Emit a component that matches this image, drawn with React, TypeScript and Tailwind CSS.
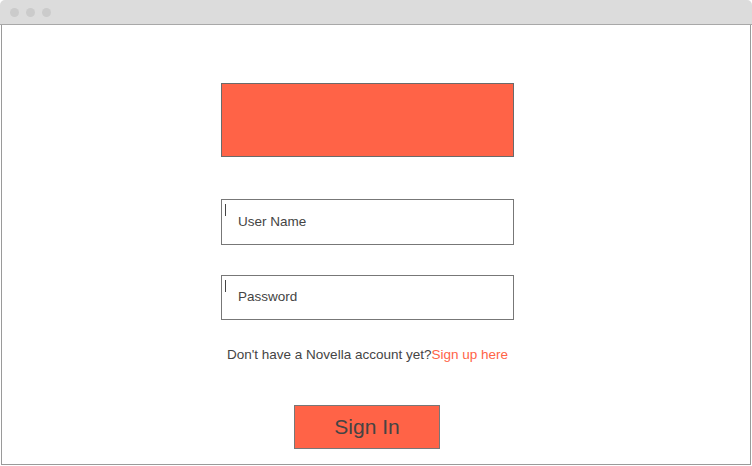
export default function App() {
  return (
    <div className="w-[752px] h-[466px] bg-white flex flex-col" style={{ fontFamily: '"Liberation Sans", Arial, sans-serif' }}>
      <div className="h-[25px] bg-[#dcdcdc] rounded-t-[5px] flex items-center gap-[7px] pl-[10px] border-b border-[#a8a8a8] shrink-0">
        <div className="w-[9px] h-[9px] rounded-full bg-[#cbcbcb]" />
        <div className="w-[9px] h-[9px] rounded-full bg-[#cbcbcb]" />
        <div className="w-[9px] h-[9px] rounded-full bg-[#cbcbcb]" />
      </div>
      <div className="flex-1 mx-[1px] mb-[1px] border-x border-b border-[#9a9a9a] flex flex-col">
        <div className="ml-[219px] w-[293px] flex flex-col items-center">
          <div className="mt-[58px] w-[293px] h-[74px] bg-[#ff6347] border border-[#6a6a6a]" />
          <div className="mt-[42px] w-[293px] h-[46px] border border-[#777] relative flex items-center pl-4 text-[13.5px] text-[#444]">
            <div className="absolute left-[3px] top-[4px] w-px h-[12px] bg-[#444]" />
            User Name
          </div>
          <div className="mt-[30px] w-[293px] h-[45px] border border-[#777] relative flex items-center pl-4 text-[13.5px] text-[#444]">
            <div className="absolute left-[3px] top-[4px] w-px h-[12px] bg-[#444]" />
            Password
          </div>
          <div className="mt-[25px] text-[13.5px] text-[#444] leading-[20px] whitespace-nowrap">
            Don't have a Novella account yet?<span className="text-[#ff6347]">Sign up here</span>
          </div>
          <div className="mt-[40px] self-start ml-[73px] w-[146px] h-[44px] bg-[#ff6347] border border-[#777] flex items-center justify-center text-[21px] text-[#444]">
            Sign In
          </div>
        </div>
      </div>
    </div>
  );
}
